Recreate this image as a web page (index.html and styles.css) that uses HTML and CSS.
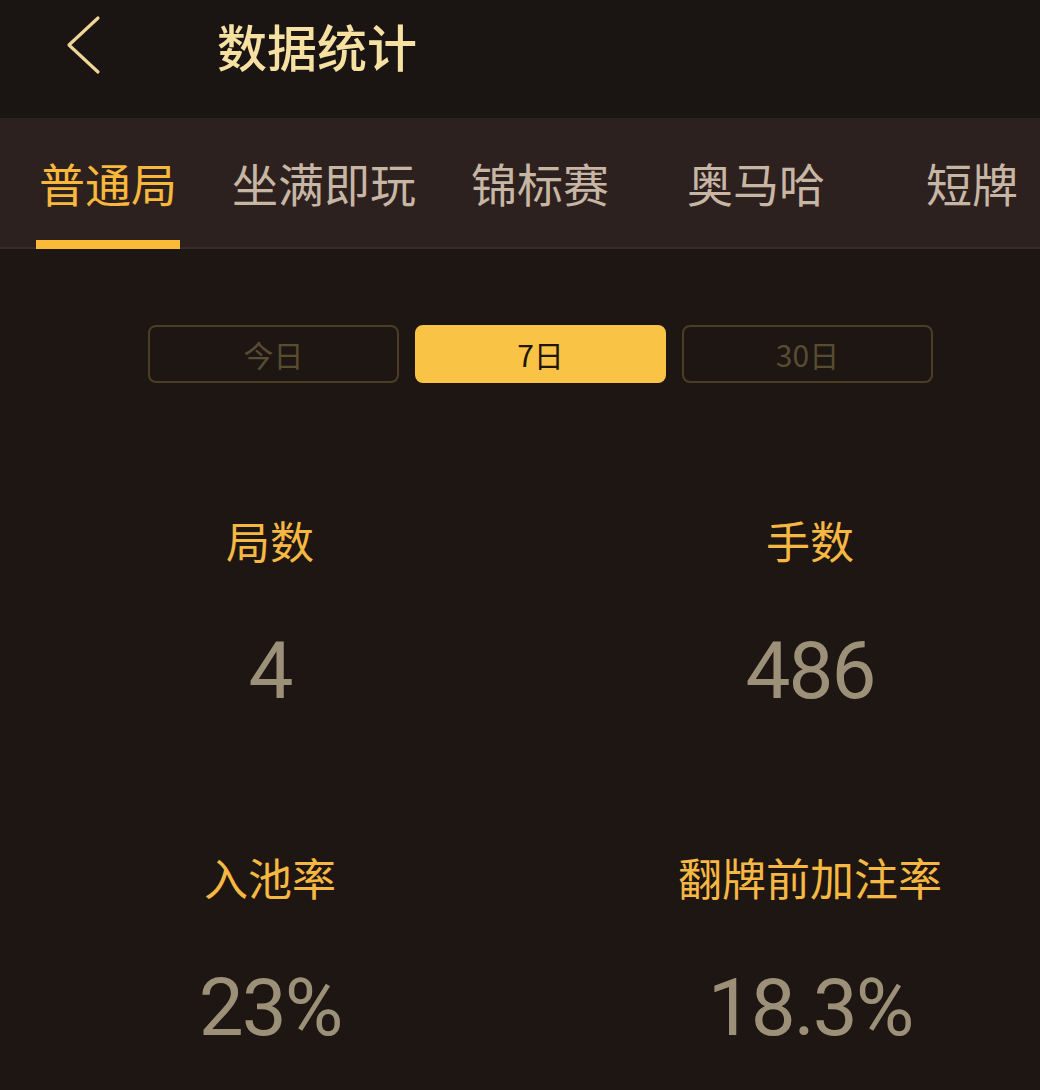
FILE: index.html
```
<!DOCTYPE html>
<html lang="zh-CN">
<head>
<meta charset="utf-8">
<title>数据统计</title>
<link rel="stylesheet" href="styles.css">
</head>
<body>
<div class="page">
  <header class="header">
    <svg class="back" width="40" height="60" viewBox="0 0 40 60">
      <polyline points="34,3 5,30 34,57" fill="none" stroke="#efd597" stroke-width="3.2" stroke-linecap="round" stroke-linejoin="round"/>
    </svg>
    <h1 class="title">数据统计</h1>
  </header>
  <nav class="tabs">
    <div class="tab active">普通局<span class="indicator"></span></div>
    <div class="tab">坐满即玩</div>
    <div class="tab">锦标赛</div>
    <div class="tab">奥马哈</div>
    <div class="tab">短牌</div>
  </nav>
  <div class="segments">
    <div class="seg">今日</div>
    <div class="seg on">7日</div>
    <div class="seg">30日</div>
  </div>
  <div class="stats">
    <div class="stat"><div class="label">局数</div><div class="value">4</div></div>
    <div class="stat"><div class="label">手数</div><div class="value">486</div></div>
    <div class="stat"><div class="label">入池率</div><div class="value">23%</div></div>
    <div class="stat"><div class="label">翻牌前加注率</div><div class="value">18.3%</div></div>
  </div>
</div>
</body>
</html>
```
FILE: styles.css
```
html, body {
  margin: 0;
  padding: 0;
  background: #1e1613;
}
body {
  font-family: "Noto Sans CJK SC", "Noto Sans", Roboto, sans-serif;
}
.page {
  width: 1040px;
  height: 1090px;
  overflow: hidden;
  background: #1e1613;
}
.header {
  height: 118px;
  background: #1a1513;
  display: flex;
  align-items: center;
}
.back {
  margin-left: 64px;
  margin-top: -28px;
  flex: 0 0 auto;
}
.title {
  margin: -28px 0 0 113px;
  font-size: 50px;
  font-weight: 500;
  color: #f6e0a2;
  letter-spacing: 0;
  line-height: 60px;
}
.tabs {
  height: 129px;
  background: #2d211f;
  border-bottom: 2px solid #372b28;
  display: flex;
  overflow: visible;
  white-space: nowrap;
}
.tab {
  flex: 0 0 216px;
  position: relative;
  text-align: center;
  font-size: 46px;
  line-height: 60px;
  padding-top: 34px;
  color: #c8b6a4;
}
.tab.active {
  color: #f7b83b;
}
.indicator {
  position: absolute;
  left: 36px;
  width: 144px;
  height: 9px;
  bottom: -2px;
  background: #f9bb38;
}
.segments {
  display: flex;
  justify-content: flex-start;
  gap: 16px;
  margin-top: 76px;
  padding-left: 148px;
}
.seg {
  box-sizing: border-box;
  width: 251px;
  height: 58px;
  border: 2px solid #4a3f24;
  border-radius: 8px;
  display: flex;
  align-items: center;
  justify-content: center;
  font-size: 30px;
  color: #584c31;
}
.seg.on {
  background: #f9c446;
  border-color: #f9c446;
  color: #241407;
}
.stats {
  display: grid;
  grid-template-columns: 540px 540px;
  margin-top: 127px;
}
.stat {
  display: flex;
  flex-direction: column;
  align-items: center;
  height: 337px;
}
.label {
  height: 60px;
  line-height: 60px;
  font-size: 44px;
  color: #f6b842;
}
.value {
  margin-top: 51px;
  height: 100px;
  line-height: 100px;
  font-family: Roboto, "Noto Sans", sans-serif;
  font-size: 80px;
  letter-spacing: -2px;
  color: #9c9178;
}
```
